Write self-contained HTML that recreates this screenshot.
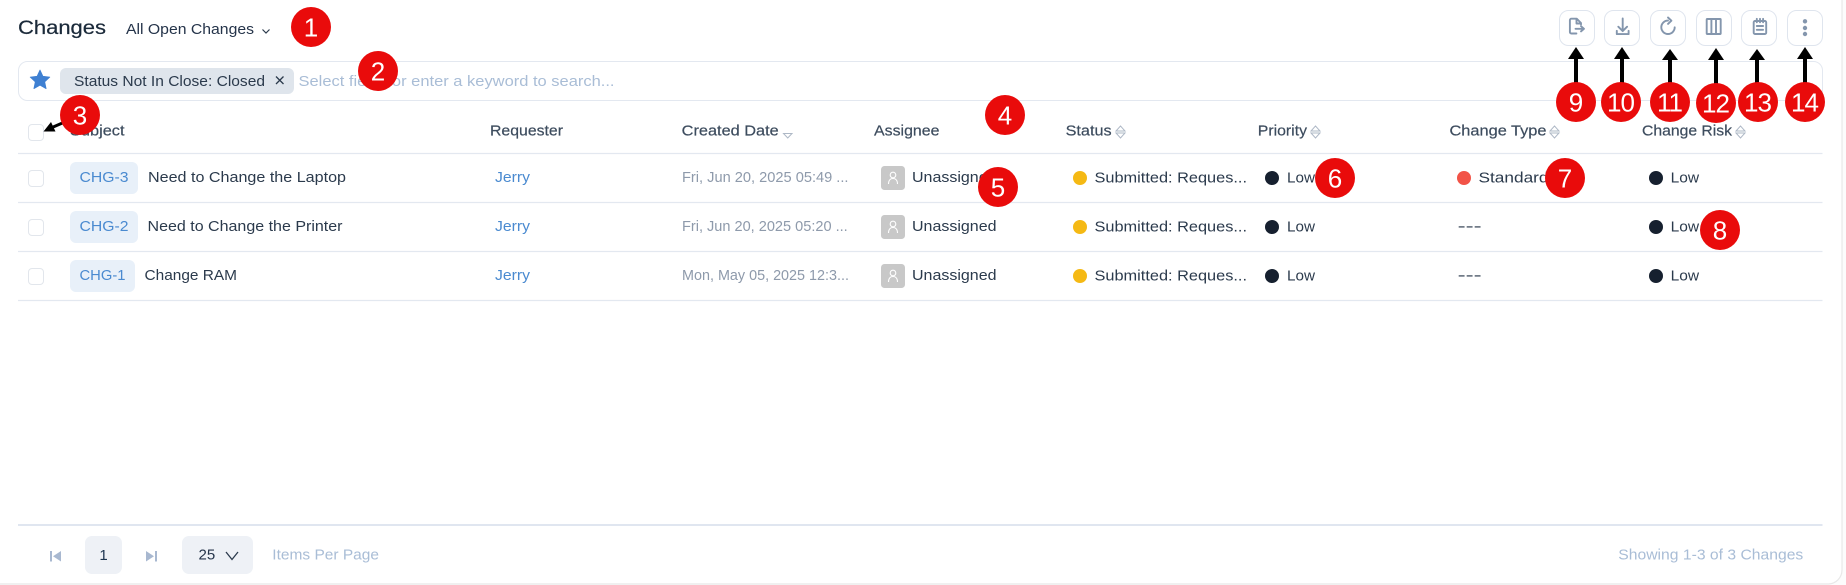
<!DOCTYPE html>
<html><head><meta charset="utf-8"><title>Changes</title>
<style>
html,body{margin:0;padding:0;background:#fcfcfc;width:1846px;height:585px;overflow:hidden}
svg{display:block}
text{font-family:"Liberation Sans",sans-serif;font-size:15px;fill:#2b3a4c}
.h{fill:#3d4c5e;font-size:15px;stroke:#3d4c5e;stroke-width:.2}
.b{font-size:26px;fill:#fff;text-anchor:middle}
.n{letter-spacing:-1px}
.cb{fill:#fff;stroke:#e2e6ec;stroke-width:1}
.l{stroke:#e3e8f0;stroke-width:1.2}
.ic{fill:none;stroke:#8496ad;stroke-width:1.9;stroke-linecap:round;stroke-linejoin:round}
.sort{fill:none;stroke:#aeb8c6;stroke-width:1}
.lk{fill:#4a8ad0}
.dt{fill:#8e9aab}
.mu{fill:#a9bdd6}
</style></head>
<body>
<svg width="1846" height="585" viewBox="0 0 1846 585" xmlns="http://www.w3.org/2000/svg">
<path d="M-2 -2H1842V570a14 14 0 0 1-14 14H-2Z" fill="#fff" stroke="#e8e8e8" stroke-width="1.2"/>

<text x="18" y="34" style="font-size:19px;fill:#1b2a3a;stroke:#1b2a3a;stroke-width:.2" textLength="88" lengthAdjust="spacingAndGlyphs">Changes</text>
<text x="126" y="34" style="fill:#25344a" textLength="128" lengthAdjust="spacingAndGlyphs">All Open Changes</text>
<path d="M262.500 29.500l3.500 3.500 3.500-3.500" fill="none" stroke="#2b3a4c" stroke-width="1.200"/>

<rect x="18.500" y="61.500" width="1804" height="39" rx="9" fill="#fff" stroke="#e3e8f0"/>
<path d="M40 70l2.900 6.300 6.900.8-5.100 4.700 1.400 6.800-6.100-3.400-6.100 3.400 1.400-6.800-5.100-4.700 6.900-.8Z" fill="#3f80d2" stroke="#3f80d2" stroke-width=".8" stroke-linejoin="round"/>
<rect x="60" y="68" width="234" height="26" rx="6" fill="#dfe5ec"/>
<text x="74" y="86" textLength="191" lengthAdjust="spacingAndGlyphs">Status Not In Close: Closed</text>
<path d="M276 76.500l7.500 7.500M283.500 76.500l-7.500 7.500" stroke="#2b3a4c" stroke-width="1.300"/>
<text x="298.500" y="86" class="mu" textLength="316" lengthAdjust="spacingAndGlyphs">Select fields or enter a keyword to search...</text>

<rect class="cb" x="28.500" y="124.500" width="15" height="16" rx="3.500"/>
<text class="h" x="70" y="135.500" textLength="54.500" lengthAdjust="spacingAndGlyphs">Subject</text>
<text class="h" x="490" y="135.500" textLength="73" lengthAdjust="spacingAndGlyphs">Requester</text>
<text class="h" x="681.700" y="135.500" textLength="97" lengthAdjust="spacingAndGlyphs">Created Date</text>
<path class="sort" d="M783.500 133.500h8.500l-4.250 4.500Z"/>
<text class="h" x="874" y="135.500" textLength="65.500" lengthAdjust="spacingAndGlyphs">Assignee</text>
<text class="h" x="1065.600" y="135.500" textLength="46" lengthAdjust="spacingAndGlyphs">Status</text>
<path class="sort" d="M1116 131l4.500-5 4.500 5ZM1116 133l4.500 5 4.500-5Z"/>
<text class="h" x="1257.800" y="135.500" textLength="49.200" lengthAdjust="spacingAndGlyphs">Priority</text>
<path class="sort" d="M1311 131l4.500-5 4.500 5ZM1311 133l4.500 5 4.500-5Z"/>
<text class="h" x="1449.500" y="135.500" textLength="97" lengthAdjust="spacingAndGlyphs">Change Type</text>
<path class="sort" d="M1550 131l4.500-5 4.500 5ZM1550 133l4.500 5 4.500-5Z"/>
<text class="h" x="1642" y="135.500" textLength="90" lengthAdjust="spacingAndGlyphs">Change Risk</text>
<path class="sort" d="M1736 131l4.500-5 4.500 5ZM1736 133l4.500 5 4.500-5Z"/>

<path class="l" d="M18 153.500H1822.500M18 202.500H1822.500M18 251.500H1822.500M18 300.500H1822.500"/>

<!-- Row 1 -->
<rect class="cb" x="28.500" y="170.500" width="15" height="16" rx="3.500"/>
<rect x="70" y="162" width="68" height="32" rx="6" fill="#e8f0f9"/>
<text class="lk" x="79.500" y="182" textLength="49" lengthAdjust="spacingAndGlyphs">CHG-3</text>
<text x="148" y="182" textLength="198" lengthAdjust="spacingAndGlyphs">Need to Change the Laptop</text>
<text class="lk" x="495" y="182" textLength="35" lengthAdjust="spacingAndGlyphs">Jerry</text>
<text class="dt" x="682" y="182" textLength="166.500" lengthAdjust="spacingAndGlyphs">Fri, Jun 20, 2025 05:49 ...</text>
<rect x="881" y="166" width="24" height="24" rx="3.500" fill="#c8c8c8"/>
<g fill="none" stroke="#fff" stroke-width="1.100"><circle cx="893" cy="175" r="2.800"/><path d="M888.500 184c0-3.500 1.800-5.500 4.500-5.500s4.500 2 4.500 5.500"/></g>
<text x="912" y="182" textLength="84.500" lengthAdjust="spacingAndGlyphs">Unassigned</text>
<circle cx="1080" cy="178" r="7" fill="#f5b914"/>
<text x="1094.500" y="182.500" textLength="152.500" lengthAdjust="spacingAndGlyphs">Submitted: Reques...</text>
<circle cx="1272" cy="178" r="7" fill="#16202f"/>
<text x="1287" y="182.500" textLength="28" lengthAdjust="spacingAndGlyphs">Low</text>
<circle cx="1464" cy="178" r="7" fill="#f25347"/>
<text x="1478.500" y="182.500" textLength="70" lengthAdjust="spacingAndGlyphs">Standard</text>
<circle cx="1656" cy="178" r="7" fill="#16202f"/>
<text x="1670.600" y="182.500" textLength="28.500" lengthAdjust="spacingAndGlyphs">Low</text>

<!-- Row 2 -->
<rect class="cb" x="28.500" y="219.500" width="15" height="16" rx="3.500"/>
<rect x="70" y="211" width="68" height="32" rx="6" fill="#e8f0f9"/>
<text class="lk" x="79.500" y="231" textLength="49" lengthAdjust="spacingAndGlyphs">CHG-2</text>
<text x="147.500" y="231" textLength="195" lengthAdjust="spacingAndGlyphs">Need to Change the Printer</text>
<text class="lk" x="495" y="231" textLength="35" lengthAdjust="spacingAndGlyphs">Jerry</text>
<text class="dt" x="682" y="231" textLength="165.700" lengthAdjust="spacingAndGlyphs">Fri, Jun 20, 2025 05:20 ...</text>
<rect x="881" y="215" width="24" height="24" rx="3.500" fill="#c8c8c8"/>
<g fill="none" stroke="#fff" stroke-width="1.100"><circle cx="893" cy="224" r="2.800"/><path d="M888.500 233c0-3.500 1.800-5.500 4.500-5.500s4.500 2 4.500 5.500"/></g>
<text x="912" y="231" textLength="84.500" lengthAdjust="spacingAndGlyphs">Unassigned</text>
<circle cx="1080" cy="227" r="7" fill="#f5b914"/>
<text x="1094.500" y="231.500" textLength="152.500" lengthAdjust="spacingAndGlyphs">Submitted: Reques...</text>
<circle cx="1272" cy="227" r="7" fill="#16202f"/>
<text x="1287" y="231.500" textLength="28" lengthAdjust="spacingAndGlyphs">Low</text>
<text x="1457.600" y="231" textLength="24" lengthAdjust="spacingAndGlyphs">---</text>
<circle cx="1656" cy="227" r="7" fill="#16202f"/>
<text x="1670.600" y="231.500" textLength="28.500" lengthAdjust="spacingAndGlyphs">Low</text>

<!-- Row 3 -->
<rect class="cb" x="28.500" y="268.500" width="15" height="16" rx="3.500"/>
<rect x="70" y="260" width="65" height="32" rx="6" fill="#e8f0f9"/>
<text class="lk" x="79.500" y="280" textLength="46" lengthAdjust="spacingAndGlyphs">CHG-1</text>
<text x="144.500" y="280" textLength="92.500" lengthAdjust="spacingAndGlyphs">Change RAM</text>
<text class="lk" x="495" y="280" textLength="35" lengthAdjust="spacingAndGlyphs">Jerry</text>
<text class="dt" x="682" y="280" textLength="167" lengthAdjust="spacingAndGlyphs">Mon, May 05, 2025 12:3...</text>
<rect x="881" y="264" width="24" height="24" rx="3.500" fill="#c8c8c8"/>
<g fill="none" stroke="#fff" stroke-width="1.100"><circle cx="893" cy="273" r="2.800"/><path d="M888.500 282c0-3.500 1.800-5.500 4.500-5.500s4.500 2 4.500 5.500"/></g>
<text x="912" y="280" textLength="84.500" lengthAdjust="spacingAndGlyphs">Unassigned</text>
<circle cx="1080" cy="276" r="7" fill="#f5b914"/>
<text x="1094.500" y="280.500" textLength="152.500" lengthAdjust="spacingAndGlyphs">Submitted: Reques...</text>
<circle cx="1272" cy="276" r="7" fill="#16202f"/>
<text x="1287" y="280.500" textLength="28" lengthAdjust="spacingAndGlyphs">Low</text>
<text x="1457.600" y="280" textLength="24" lengthAdjust="spacingAndGlyphs">---</text>
<circle cx="1656" cy="276" r="7" fill="#16202f"/>
<text x="1670.600" y="280.500" textLength="28.500" lengthAdjust="spacingAndGlyphs">Low</text>

<!-- Toolbar buttons -->
<g fill="#fff" stroke="#dfe5ee">
<rect x="1559.500" y="10.500" width="35" height="35" rx="9"/>
<rect x="1604.500" y="10.500" width="35" height="35" rx="9"/>
<rect x="1650.500" y="10.500" width="35" height="35" rx="9"/>
<rect x="1696.500" y="10.500" width="35" height="35" rx="9"/>
<rect x="1741.500" y="10.500" width="35" height="35" rx="9"/>
<rect x="1787.500" y="10.500" width="35" height="35" rx="9"/>
</g>
<path class="ic" d="M1581 24.500V23l-4.300-4.300h-5.300a1.500 1.500 0 0 0-1.500 1.500v11.800a1.500 1.500 0 0 0 1.500 1.500h5M1576.500 19v4.500h4.500M1575.500 28.800h8.500M1581 26.200l3 2.600-3 2.600"/>
<path class="ic" d="M1622.700 18.500v12M1618.300 26.700l4.400 4.400 4.400-4.400M1616.800 30.800v3.300h11.800v-3.300"/>
<path class="ic" d="M1674.700 27.300a6.700 6.700 0 1 1-6.700-6.700M1668 17.500l3.400 3.200-3.400 3.200"/>
<g class="ic"><rect x="1706.700" y="19" width="14" height="15" rx=".6"/><path d="M1711.400 19v15M1716 19v15"/></g>
<g class="ic"><rect x="1753.700" y="21" width="12.500" height="13" rx="1.300"/><path d="M1756.800 18.800v3.500M1760 18.800v3.500M1763.100 18.800v3.500M1756.800 26h6.300M1756.800 29.800h6.300"/></g>
<g fill="#8496ad"><circle cx="1805" cy="21.300" r="2.200"/><circle cx="1805" cy="28" r="2.200"/><circle cx="1805" cy="34" r="2.200"/></g>

<!-- Footer -->
<path d="M18 525H1822.500" stroke="#e0e6f0" stroke-width="2"/>
<path d="M51 551v10.500" stroke="#a8b8d0" stroke-width="2"/><path d="M61 551v10.500l-8-5.250Z" fill="#a8b8d0"/>
<rect x="85" y="536" width="37" height="38" rx="7" fill="#eef1f6"/>
<text x="103.500" y="560" text-anchor="middle" style="fill:#1d3550">1</text>
<path d="M146 551v10.500l8-5.250Z" fill="#a8b8d0"/><path d="M156 551v10.500" stroke="#a8b8d0" stroke-width="2"/>
<rect x="182" y="536" width="71" height="38" rx="7" fill="#eef1f6"/>
<text x="198.500" y="559.500" style="fill:#25344a">25</text>
<path d="M226 552l6 7.500 6-7.500" fill="none" stroke="#2b3a4c" stroke-width="1.300"/>
<text x="272.300" y="559.500" class="mu" textLength="106.700" lengthAdjust="spacingAndGlyphs">Items Per Page</text>
<text x="1618.300" y="559.500" class="mu" textLength="185" lengthAdjust="spacingAndGlyphs">Showing 1-3 of 3 Changes</text>

<!-- Annotation arrows -->
<g stroke="#000" stroke-width="4">
<path d="M1576 84V56M1622 84V56M1670 84V58M1716 84V56M1757 84V58M1805 84V56"/>
</g>
<g fill="#000">
<path d="M1576 47l8 12h-16Z"/><path d="M1622 47l8 12h-16Z"/><path d="M1670 49l8 11h-16Z"/><path d="M1716 48l8 12h-16Z"/><path d="M1757 49l8 11h-16Z"/><path d="M1805 47l8 12h-16Z"/>
</g>
<path d="M67 121L52 127.500" stroke="#000" stroke-width="3"/><path d="M43.500 131.500l7.500-9.500 4.500 9.500Z" fill="#000"/>

<!-- Annotation badges -->
<g fill="#e90b0b">
<circle cx="311" cy="27" r="20"/><circle cx="378" cy="71" r="20"/><circle cx="80" cy="115" r="20"/>
<circle cx="1005" cy="115" r="20"/><circle cx="998" cy="187" r="20"/><circle cx="1335" cy="178" r="20"/>
<circle cx="1565" cy="178" r="20"/><circle cx="1720" cy="230" r="20"/>
<circle cx="1576" cy="102" r="20"/><circle cx="1621" cy="102" r="20"/><circle cx="1670" cy="102" r="20"/>
<circle cx="1716" cy="103" r="20"/><circle cx="1758" cy="102" r="20"/><circle cx="1805" cy="102" r="20"/>
</g>
<text class="b" x="311" y="36.500">1</text>
<text class="b" x="378" y="80.500">2</text>
<text class="b" x="80" y="124.500">3</text>
<text class="b" x="1005" y="124.500">4</text>
<text class="b" x="998" y="196.500">5</text>
<text class="b" x="1335" y="187.500">6</text>
<text class="b" x="1565" y="187.500">7</text>
<text class="b" x="1720" y="239.500">8</text>
<text class="b" x="1576" y="111.500">9</text>
<text class="b n" x="1620.500" y="111.500">10</text>
<text class="b n" x="1669.500" y="111.500">11</text>
<text class="b n" x="1715.500" y="112.500">12</text>
<text class="b n" x="1757.500" y="111.500">13</text>
<text class="b n" x="1804.500" y="111.500">14</text>
</svg>
</body></html>
